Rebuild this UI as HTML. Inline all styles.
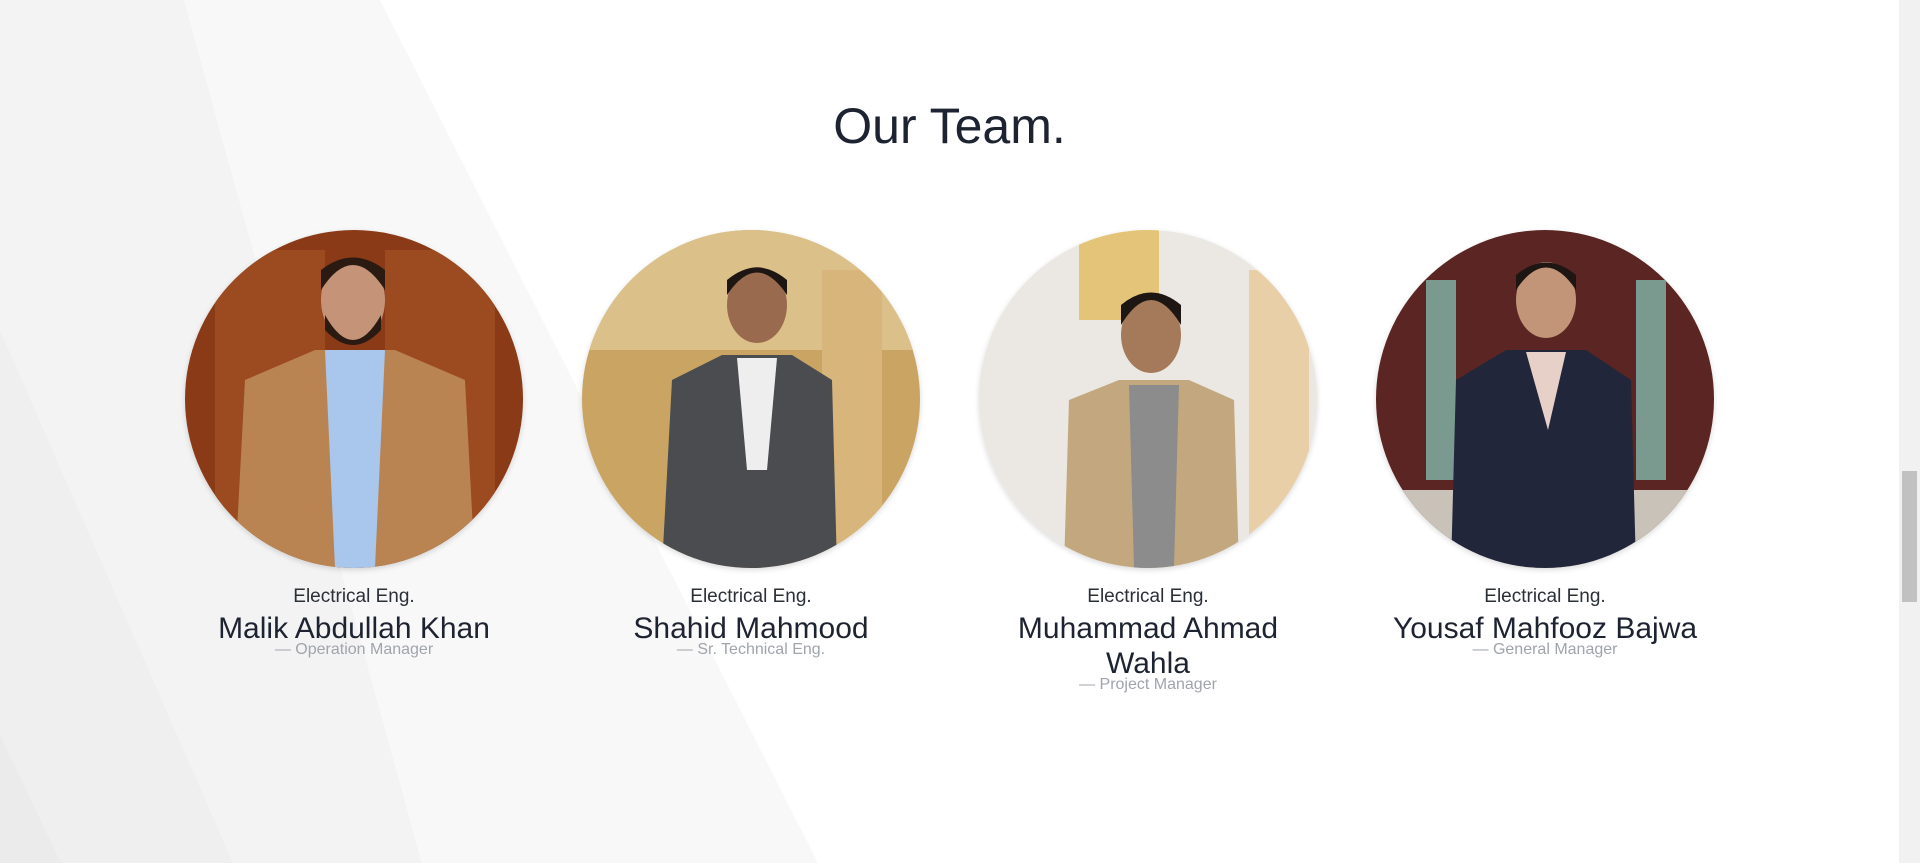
<!DOCTYPE html>
<html><head><meta charset="utf-8"><style>
html,body{margin:0;padding:0;width:1920px;height:863px;overflow:hidden;background:#fff;font-family:"Liberation Sans",sans-serif;}
.bg{position:absolute;left:0;top:0;width:1899px;height:863px}
h1{position:absolute;top:94px;left:0;width:1899px;text-align:center;margin:0;font-weight:400;font-size:50px;color:#1d2330;line-height:64px}
.card{position:absolute;top:230px;width:340px;text-align:center}
.ph{width:338px;height:338px;border-radius:50%;margin:0 auto;overflow:hidden;box-shadow:0 2px 6px rgba(0,0,0,.15)}
.ph svg{display:block}
.role{margin-top:17px;font-size:19px;color:#2b2f36;line-height:24px}
.name{font-size:30px;color:#1d2330;line-height:35px;margin-top:2px}
.sub{font-size:16px;color:#a0a4ab;line-height:18px;margin-top:-5px}
.sb{position:absolute;right:0;top:0;width:21px;height:863px;background:#f1f1f1}
.th{position:absolute;right:3px;top:471px;width:15px;height:131px;background:#c1c1c1}
</style></head><body>
<svg class="bg" viewBox="0 0 1899 863">
<polygon points="0,0 184,0 422,863 0,863" fill="#f3f3f3"/>
<polygon points="184,0 380,0 818,863 422,863" fill="#f8f8f8"/>
<polygon points="0,330 233,863 0,863" fill="#efefef"/>
<polygon points="0,735 61,863 0,863" fill="#ebebeb"/>
</svg>
<h1>Our Team.</h1>

<div class="card" style="left:184px"><div class="ph"><svg width="338" height="338" viewBox="0 0 338 338">
<rect width="338" height="338" fill="#8a3a16"/><rect x="30" y="20" width="110" height="300" fill="#9c4a20"/><rect x="200" y="20" width="110" height="300" fill="#9c4a20"/>
<path d="M50 338 L60 150 L130 120 L210 120 L280 150 L290 338Z" fill="#b98452"/>
<path d="M140 120 L200 120 L190 338 L150 338Z" fill="#a9c6ec"/>
<ellipse cx="168" cy="70" rx="32" ry="42" fill="#c59478"/><path d="M136 60 Q168 10 200 60 L200 40 Q168 15 136 40Z" fill="#2a1a12"/><path d="M140 85 Q168 135 196 85 L196 100 Q168 130 140 100Z" fill="#2a1a12"/>
</svg></div><div class="role">Electrical Eng.</div><div class="name">Malik Abdullah Khan</div><div class="sub">— Operation Manager</div></div>

<div class="card" style="left:581px"><div class="ph"><svg width="338" height="338" viewBox="0 0 338 338">
<rect width="338" height="338" fill="#c9a462"/><rect x="0" y="0" width="338" height="120" fill="#dcc08a"/><rect x="240" y="40" width="60" height="300" fill="#d8b57a"/>
<path d="M80 338 L90 150 L140 125 L210 125 L250 150 L255 338Z" fill="#4a4c50"/>
<path d="M155 128 L195 128 L185 240 L165 240Z" fill="#eeeeee"/>
<ellipse cx="175" cy="75" rx="30" ry="38" fill="#9a6a4e"/><path d="M145 65 Q175 20 205 65 L205 50 Q175 25 145 50Z" fill="#1e1612"/>
</svg></div><div class="role">Electrical Eng.</div><div class="name">Shahid Mahmood</div><div class="sub">— Sr. Technical Eng.</div></div>

<div class="card" style="left:978px"><div class="ph"><svg width="338" height="338" viewBox="0 0 338 338">
<rect width="338" height="338" fill="#ebe7e2"/><rect x="100" y="0" width="80" height="90" fill="#e4c478"/><rect x="270" y="40" width="60" height="300" fill="#e8cfa8"/>
<path d="M85 338 L90 170 L140 150 L210 150 L255 170 L260 338Z" fill="#c3a77e"/>
<path d="M150 155 L200 155 L195 338 L155 338Z" fill="#8c8c8c"/>
<ellipse cx="172" cy="105" rx="30" ry="38" fill="#a57a5a"/><path d="M142 95 Q172 45 202 95 L202 75 Q172 50 142 75Z" fill="#1e1612"/>
</svg></div><div class="role">Electrical Eng.</div><div class="name">Muhammad Ahmad Wahla</div><div class="sub">— Project Manager</div></div>

<div class="card" style="left:1375px"><div class="ph"><svg width="338" height="338" viewBox="0 0 338 338">
<rect width="338" height="338" fill="#5a2522"/><rect x="50" y="50" width="30" height="200" fill="#7a9a90"/><rect x="260" y="50" width="30" height="200" fill="#7a9a90"/><rect x="0" y="260" width="338" height="78" fill="#c9c2b8"/>
<path d="M75 338 L80 150 L130 120 L210 120 L255 150 L260 338Z" fill="#22263a"/>
<path d="M150 122 L190 122 L172 200Z" fill="#e6d0c8"/>
<ellipse cx="170" cy="70" rx="30" ry="38" fill="#c29478"/><path d="M140 60 Q170 15 200 60 L200 45 Q170 20 140 45Z" fill="#1e1612"/>
</svg></div><div class="role">Electrical Eng.</div><div class="name">Yousaf Mahfooz Bajwa</div><div class="sub">— General Manager</div></div>

<div class="sb"><div class="th"></div></div>
</body></html>
